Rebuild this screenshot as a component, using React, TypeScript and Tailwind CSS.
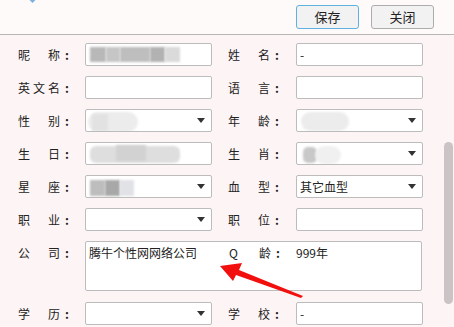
import React from "react";

const font = { fontFamily: '"Noto Sans CJK SC", "Noto Sans", sans-serif' };

function Label({ chars }: { chars: string[] }) {
  return (
    <div className="flex items-center">
      <div className="flex w-[42px] justify-between">
        {chars.map((c, i) => (
          <span key={i}>{c}</span>
        ))}
      </div>
      <span className="ml-[5px] font-bold">:</span>
    </div>
  );
}

function Arrow() {
  return (
    <svg viewBox="0 0 8 5" className="h-[5px] w-[8px] fill-[#333]">
      <path d="M0 0 L8 0 L4 5 Z" />
    </svg>
  );
}

function Field({ value, select, children }: { value?: string; select?: boolean; children?: React.ReactNode }) {
  return (
    <div className="relative flex h-[23px] w-[127px] items-center overflow-hidden rounded-[2px] border border-[#bcbcbc] bg-white pl-[3px] pr-[6px]">
      <span className="flex-1 text-[12px] leading-none">{value}</span>
      {children}
      {select && <Arrow />}
    </div>
  );
}

function Blur({ cls }: { cls: string }) {
  return <div className={"absolute blur-[1px] " + cls} />;
}

export default function App() {
  return (
    <div className="relative h-[327px] w-[454px] overflow-hidden bg-[#fdf5f5] text-[12px] text-[#222]" style={font}>
      <div className="absolute left-[30px] top-[-3px] h-[5px] w-[5px] rotate-45 bg-[#7fb0e0]" />

      <div className="flex h-[35px] items-center justify-end gap-[12px] border-b border-[#b6b6b6] bg-[#fefafa] pr-[20px]">
        <button className="h-[24px] w-[63px] rounded-[3px] border border-[#5fb1e0] bg-[#f2f2f2] text-[13px] text-[#222]">保存</button>
        <button className="h-[24px] w-[63px] rounded-[3px] border border-[#adadad] bg-[#f2f2f2] text-[13px] text-[#222]">关闭</button>
      </div>

      <div className="flex flex-col gap-[10px] pt-[8px]">
        <Row left={["昵", "称"]} right={["姓", "名"]}
          leftField={<Field>
            <Blur cls="left-[4px] top-[3px] h-[15px] w-[16px] bg-[#b8b8b8]" />
            <Blur cls="left-[20px] top-[3px] h-[15px] w-[14px] bg-[#c6c6c6]" />
            <Blur cls="left-[34px] top-[3px] h-[15px] w-[30px] bg-[#bebebe]" />
            <Blur cls="left-[64px] top-[3px] h-[15px] w-[15px] bg-[#b2b2b2]" />
            <Blur cls="left-[79px] top-[3px] h-[15px] w-[15px] bg-[#dadada]" />
          </Field>}
          rightField={<Field value="-" />} />
        <Row left={["英", "文", "名"]} right={["语", "言"]} leftField={<Field />} rightField={<Field />} />
        <Row left={["性", "别"]} right={["年", "龄"]}
          leftField={<Field select>
            <Blur cls="left-[2px] top-[2px] h-[20px] w-[50px] rounded-full bg-[#ececec]" />
            <Blur cls="left-[6px] top-[4px] h-[17px] w-[16px] bg-[#e2e2e2]" />
          </Field>}
          rightField={<Field select>
            <Blur cls="left-[4px] top-[2px] h-[19px] w-[48px] rounded-full bg-[#ececec]" />
          </Field>} />
        <Row left={["生", "日"]} right={["生", "肖"]}
          leftField={<Field>
            <Blur cls="left-[4px] top-[3px] h-[17px] w-[90px] rounded-[6px] bg-[#dedede]" />
            <Blur cls="left-[30px] top-[2px] h-[16px] w-[30px] bg-[#d2d2d2]" />
          </Field>}
          rightField={<Field select>
            <Blur cls="left-[6px] top-[4px] h-[16px] w-[14px] rounded-[5px] bg-[#c8c8c8]" />
            <Blur cls="left-[18px] top-[3px] h-[18px] w-[26px] rounded-full bg-[#f0f0f0]" />
          </Field>} />
        <Row left={["星", "座"]} right={["血", "型"]}
          leftField={<Field select>
            <Blur cls="left-[4px] top-[4px] h-[16px] w-[15px] bg-[#bdbdbd]" />
            <Blur cls="left-[19px] top-[4px] h-[16px] w-[15px] bg-[#a8a8a8]" />
            <Blur cls="left-[34px] top-[4px] h-[16px] w-[14px] bg-[#e0e2e6]" />
          </Field>}
          rightField={<Field select value="其它血型" />} />
        <Row left={["职", "业"]} right={["职", "位"]} leftField={<Field select />} rightField={<Field />} />

        <div className="flex">
          <div className="flex h-[23px] w-[85px] items-center pl-[18px]">
            <Label chars={["公", "司"]} />
          </div>
          <div className="flex h-[50px] w-[337px] items-start rounded-[2px] border border-[#bcbcbc] bg-white pt-[2px]">
            <div className="w-[143px] pl-[3px]">腾牛个性网网络公司</div>
            <div className="w-[67px]">
              <Label chars={["Q", "龄"]} />
            </div>
            <div>999年</div>
          </div>
        </div>

        <div className="mt-[1px]">
          <Row left={["学", "历"]} right={["学", "校"]} leftField={<Field select />} rightField={<Field value="-" />} />
        </div>
      </div>

      <div className="absolute left-[444px] top-[142px] h-[162px] w-[9px] rounded-full bg-[#cbc3c5]" />

      <svg className="absolute left-0 top-0" width="454" height="327" viewBox="0 0 454 327">
        <polygon points="220,266 242,263 239,270 303,296 301,298 236,275 233,281" fill="#f2100e" />
      </svg>
    </div>
  );
}

function Row({ left, right, leftField, rightField }: { left: string[]; right: string[]; leftField: React.ReactNode; rightField: React.ReactNode }) {
  return (
    <div className="flex items-center">
      <div className="w-[85px] pl-[18px]">
        <Label chars={left} />
      </div>
      {leftField}
      <div className="ml-[16px] w-[68px]">
        <Label chars={right} />
      </div>
      {rightField}
    </div>
  );
}
